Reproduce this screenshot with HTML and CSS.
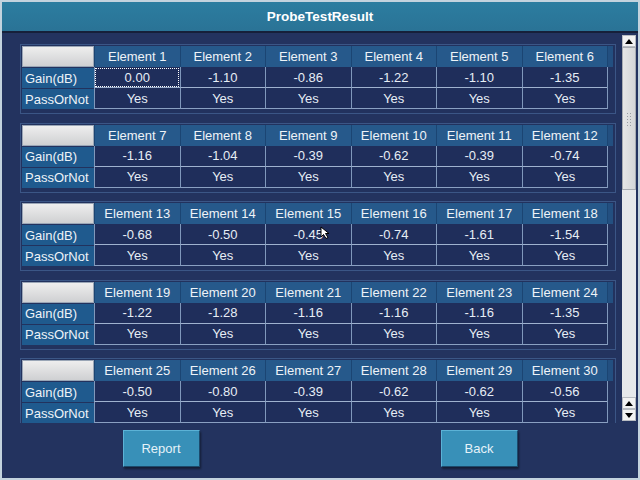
FILE: index.html
```html
<!DOCTYPE html>
<html lang="en">
  <head>
    <meta charset="utf-8">
    <title>ProbeTestResult</title>
    <link rel="stylesheet" href="styles.css">
  </head>
  <body>
    <div class="window">
      <!-- Title bar -->
      <div class="titlebar">ProbeTestResult</div>

      <div class="main">
        <!-- Result blocks -->
        <div class="list">
          <div class="block">
            <div class="grid">
              <span class="corner"></span>
              <span class="head">Element 1</span><span class="head">Element 2</span><span class="head">Element 3</span>
              <span class="head">Element 4</span><span class="head">Element 5</span><span class="head">Element 6</span>
              <span class="stub"></span>
              <span class="label">Gain(dB)</span>
              <span class="cell gain focus">0.00</span><span class="cell gain">-1.10</span><span class="cell gain">-0.86</span>
              <span class="cell gain">-1.22</span><span class="cell gain">-1.10</span><span class="cell gain">-1.35</span>
              <span class="spacer"></span>
              <span class="label">PassOrNot</span>
              <span class="cell">Yes</span><span class="cell">Yes</span><span class="cell">Yes</span>
              <span class="cell">Yes</span><span class="cell">Yes</span><span class="cell">Yes</span>
              <span class="spacer"></span>
            </div>
          </div>

          <div class="block">
            <div class="grid">
              <span class="corner"></span>
              <span class="head">Element 7</span><span class="head">Element 8</span><span class="head">Element 9</span>
              <span class="head">Element 10</span><span class="head">Element 11</span><span class="head">Element 12</span>
              <span class="stub"></span>
              <span class="label">Gain(dB)</span>
              <span class="cell gain">-1.16</span><span class="cell gain">-1.04</span><span class="cell gain">-0.39</span>
              <span class="cell gain">-0.62</span><span class="cell gain">-0.39</span><span class="cell gain">-0.74</span>
              <span class="spacer"></span>
              <span class="label">PassOrNot</span>
              <span class="cell">Yes</span><span class="cell">Yes</span><span class="cell">Yes</span>
              <span class="cell">Yes</span><span class="cell">Yes</span><span class="cell">Yes</span>
              <span class="spacer"></span>
            </div>
          </div>

          <div class="block">
            <div class="grid">
              <span class="corner"></span>
              <span class="head">Element 13</span><span class="head">Element 14</span><span class="head">Element 15</span>
              <span class="head">Element 16</span><span class="head">Element 17</span><span class="head">Element 18</span>
              <span class="stub"></span>
              <span class="label">Gain(dB)</span>
              <span class="cell gain">-0.68</span><span class="cell gain">-0.50</span><span class="cell gain">-0.45</span>
              <span class="cell gain">-0.74</span><span class="cell gain">-1.61</span><span class="cell gain">-1.54</span>
              <span class="spacer"></span>
              <span class="label">PassOrNot</span>
              <span class="cell">Yes</span><span class="cell">Yes</span><span class="cell">Yes</span>
              <span class="cell">Yes</span><span class="cell">Yes</span><span class="cell">Yes</span>
              <span class="spacer"></span>
            </div>
          </div>

          <div class="block">
            <div class="grid">
              <span class="corner"></span>
              <span class="head">Element 19</span><span class="head">Element 20</span><span class="head">Element 21</span>
              <span class="head">Element 22</span><span class="head">Element 23</span><span class="head">Element 24</span>
              <span class="stub"></span>
              <span class="label">Gain(dB)</span>
              <span class="cell gain">-1.22</span><span class="cell gain">-1.28</span><span class="cell gain">-1.16</span>
              <span class="cell gain">-1.16</span><span class="cell gain">-1.16</span><span class="cell gain">-1.35</span>
              <span class="spacer"></span>
              <span class="label">PassOrNot</span>
              <span class="cell">Yes</span><span class="cell">Yes</span><span class="cell">Yes</span>
              <span class="cell">Yes</span><span class="cell">Yes</span><span class="cell">Yes</span>
              <span class="spacer"></span>
            </div>
          </div>

          <div class="block">
            <div class="grid">
              <span class="corner"></span>
              <span class="head">Element 25</span><span class="head">Element 26</span><span class="head">Element 27</span>
              <span class="head">Element 28</span><span class="head">Element 29</span><span class="head">Element 30</span>
              <span class="stub"></span>
              <span class="label">Gain(dB)</span>
              <span class="cell gain">-0.50</span><span class="cell gain">-0.80</span><span class="cell gain">-0.39</span>
              <span class="cell gain">-0.62</span><span class="cell gain">-0.62</span><span class="cell gain">-0.56</span>
              <span class="spacer"></span>
              <span class="label">PassOrNot</span>
              <span class="cell">Yes</span><span class="cell">Yes</span><span class="cell">Yes</span>
              <span class="cell">Yes</span><span class="cell">Yes</span><span class="cell">Yes</span>
              <span class="spacer"></span>
            </div>
          </div>
        </div>

        <!-- Scrollbar -->
        <div class="scrollbar">
          <div class="sb-btn">
            <svg width="8" height="5" viewBox="0 0 8 5"><polygon points="4,0 8,5 0,5" fill="#000"/></svg>
          </div>
          <div class="sb-thumb"><span class="grip"></span></div>
          <div class="sb-track"></div>
          <div class="sb-btn">
            <svg width="8" height="5" viewBox="0 0 8 5"><polygon points="4,0 8,5 0,5" fill="#000"/></svg>
          </div>
          <div class="sb-btn">
            <svg width="8" height="5" viewBox="0 0 8 5"><polygon points="0,0 8,0 4,5" fill="#000"/></svg>
          </div>
        </div>
      </div>

      <!-- Buttons -->
      <div class="footer">
        <div class="slot"><button class="btn">Report</button></div>
        <div class="slot"><button class="btn">Back</button></div>
      </div>

      <!-- Mouse pointer over Element 15 -->
      <svg class="pointer" width="11" height="13" viewBox="0 0 11 13">
        <polygon points="1,1 1,11 3.5,8.5 6,12.5 8,11.5 5.5,7.5 9,7.5" fill="#fff" stroke="#000" stroke-width="1"/>
      </svg>
    </div>
  </body>
</html>
```

FILE: styles.css
```css
/* Page */
body {
  margin: 0;
  background: #ffffff;
  font-family: "Liberation Sans", Arial, sans-serif;
}

.window {
  position: relative;
  width: 636px;
  height: 476px;
  border: 2px solid #c3d3de;
  background: #23335f;
  display: flex;
  flex-direction: column;
  overflow: hidden;
}

/* Title bar */
.titlebar {
  height: 29px;
  line-height: 29px;
  flex: none;
  text-align: center;
  color: #ffffff;
  font-size: 13.5px;
  font-weight: bold;
  background: linear-gradient(#2c7da0, #2a7396);
  border-bottom: 2px solid #16203a;
}

/* List + scrollbar */
.main {
  display: flex;
  height: 390px;
  flex: none;
}

.list {
  width: 620px;
  padding: 11px 0 0 18px;
  box-sizing: border-box;
  overflow: hidden;
}

.block {
  width: 593px;
  height: 67px;
  border: 1px solid #3b5686;
  padding: 1px 0 0 1px;
  box-sizing: content-box;
  margin-bottom: 8.5px;
  background: #22325e;
}

.grid {
  display: grid;
  grid-template-columns: 72px repeat(6, 85.5px) 6px;
  grid-template-rows: 21px 21px 21px;
  font-size: 13px;
  color: #e6edf5;
}

.grid span {
  display: flex;
  align-items: center;
  justify-content: center;
  box-sizing: border-box;
  white-space: nowrap;
}

.corner {
  background: linear-gradient(#eeeeee, #cfd0d2);
  border: 1px solid #9aa6b6;
}

.head {
  background: #26598b;
  border-left: 1px solid #1b4573;
  color: #eef3f8;
}

.stub {
  background: #234f80;
  border-left: 1px solid #1b4573;
}

.label {
  justify-content: flex-start !important;
  padding-left: 3px;
  background: #1f5a8e;
  border-top: 1px solid #22325e;
  color: #eef3f8;
}

.cell {
  background: #1f2e5b;
  border-left: 1px solid #8098bb;
  border-bottom: 1px solid #8aa0c2;
}

.cell.gain {
  border-bottom: 1px solid #9fb2cf;
}

.cell.focus {
  outline: 1px dotted #ffffff;
  outline-offset: -2px;
}

.spacer {
  border-left: 1px solid #8098bb;
}

/* Scrollbar */
.scrollbar {
  width: 14px;
  margin: 2px 0 2px 0;
  display: flex;
  flex-direction: column;
  background: #eceef0;
}

.sb-btn {
  height: 12px;
  flex: none;
  display: flex;
  align-items: center;
  justify-content: center;
  background: #f2f2f2;
  border: 1px solid #b8bcc2;
  box-sizing: border-box;
}

.sb-thumb {
  height: 143px;
  flex: none;
  display: flex;
  align-items: center;
  justify-content: center;
  background: linear-gradient(90deg, #e6e6e6, #d4d6d8);
  border: 1px solid #a8acb2;
  box-sizing: border-box;
}

.grip {
  width: 7px;
  height: 14px;
  background-image: radial-gradient(#9a9ea4 0.8px, transparent 1px);
  background-size: 3px 3px;
}

.sb-track {
  flex: 1;
  background-color: #eef0f2;
  background-image: radial-gradient(#dcdfe3 0.6px, transparent 0.8px);
  background-size: 2px 2px;
}

/* Footer */
.footer {
  flex: 1;
  display: flex;
  align-items: flex-start;
  padding-top: 7px;
}

.slot {
  flex: 1;
  display: flex;
  justify-content: center;
}

.btn {
  width: 77px;
  height: 37px;
  background: #3890b8;
  border: 1px solid #5cb2d6;
  border-right-color: #1c4a6c;
  border-bottom-color: #1c4a6c;
  box-shadow: 1px 2px 2px rgba(0, 0, 0, 0.45);
  color: #e6f2f8;
  font-family: "Liberation Sans", Arial, sans-serif;
  font-size: 13px;
}

/* Mouse pointer */
.pointer {
  position: absolute;
  left: 318px;
  top: 224px;
}
```
